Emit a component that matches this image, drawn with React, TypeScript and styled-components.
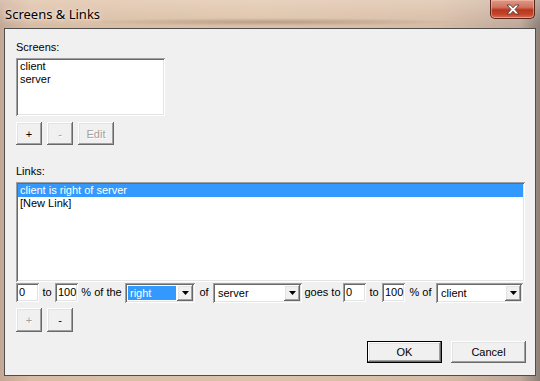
import React from "react";
import styled, { createGlobalStyle, css } from "styled-components";

const Global = createGlobalStyle`
  html, body { margin: 0; padding: 0; }
  body { width: 540px; height: 381px; overflow: hidden; font-family: "Liberation Sans", Arial, sans-serif; }
`;

const raised = css`
  box-shadow: inset -1px -1px #696969, inset 1px 1px #ffffff, inset -2px -2px #a0a0a0, inset 2px 2px #e3e3e3;
`;
const sunken = css`
  box-shadow: inset 1px 1px #a0a0a0, inset -1px -1px #ffffff, inset 2px 2px #696969, inset -2px -2px #e3e3e3;
`;

const Window = styled.div`
  width: 540px;
  height: 381px;
  box-sizing: border-box;
  display: flex;
  flex-direction: column;
  background:
    radial-gradient(ellipse 190px 4px at 270px 22px, rgba(120, 88, 66, 0.35), rgba(120, 88, 66, 0)),
    linear-gradient(180deg, rgba(255,240,225,0.35) 0px, rgba(255,240,225,0) 26px),
    linear-gradient(90deg, #c4a896 0px, #d8bca4 30px, #dcc2aa 260px, #d6bca6 440px, #bfa89a 520px, #8c8078 540px);
  padding: 0 4px 5px 4px;
`;

const TitleBar = styled.div`
  height: 28px;
  display: flex;
  align-items: flex-start;
  justify-content: space-between;
`;

const Title = styled.div`
  font-family: "Noto Sans", "Open Sans", sans-serif;
  font-size: 13px;
  line-height: 18px;
  color: #000;
  margin: 5px 0 0 1px;
  text-shadow: 0 0 6px rgba(255, 245, 235, 0.9), 0 0 3px rgba(255, 245, 235, 0.9);
`;

const CloseButton = styled.div`
  width: 45px;
  height: 19px;
  margin-right: 1px;
  box-sizing: border-box;
  border: 1px solid #5b2418;
  border-top: none;
  border-radius: 0 0 5px 5px;
  background: linear-gradient(180deg, #dc9a88 0%, #d0735e 40%, #b8361e 55%, #c4442a 80%, #d8705a 100%);
  box-shadow: inset 0 0 0 1px rgba(255, 200, 180, 0.5);
  display: flex;
  align-items: center;
  justify-content: center;
`;

const Client = styled.div`
  flex: 1;
  box-sizing: border-box;
  border: 1px solid #4e4e4e;
  background: #f0f0f0;
  padding: 0 9px 0 11px;
  display: flex;
  flex-direction: column;
  font-size: 11px;
  color: #000;
`;

const GroupLabel = styled.div<{ $top: number }>`
  margin-top: ${(p) => p.$top}px;
  height: 13px;
  line-height: 13px;
`;

const ListBox = styled.div<{ $w: number; $h: number; $top: number }>`
  width: ${(p) => p.$w}px;
  height: ${(p) => p.$h}px;
  margin-top: ${(p) => p.$top}px;
  box-sizing: border-box;
  background: #fff;
  padding: 2px;
  ${sunken};
`;

const ListItem = styled.div<{ $selected?: boolean }>`
  height: 13px;
  line-height: 13px;
  padding-left: 2px;
  background: ${(p) => (p.$selected ? "#3399ff" : "transparent")};
  color: ${(p) => (p.$selected ? "#fff" : "#000")};
  white-space: nowrap;
`;

const ButtonRow = styled.div<{ $top: number }>`
  display: flex;
  gap: 5px;
  margin-top: ${(p) => p.$top}px;
`;

const Button = styled.div<{ $w: number; $h: number; $disabled?: boolean; $default?: boolean }>`
  width: ${(p) => p.$w}px;
  height: ${(p) => p.$h}px;
  box-sizing: border-box;
  display: flex;
  align-items: center;
  justify-content: center;
  background: #f0f0f0;
  color: ${(p) => (p.$disabled ? "#a0a0a0" : "#000")};
  text-shadow: ${(p) => (p.$disabled ? "1px 1px #ffffff" : "none")};
  ${(p) =>
    p.$default
      ? css`
          box-shadow: inset 0 0 0 1px #000, inset -2px -2px #696969, inset 2px 2px #ffffff, inset -3px -3px #a0a0a0, inset 3px 3px #e3e3e3;
        `
      : raised};
`;

const ControlRow = styled.div`
  display: flex;
  align-items: flex-start;
  margin-top: 1px;
  height: 20px;
`;

const Edit = styled.div`
  width: 23px;
  height: 19px;
  box-sizing: border-box;
  background: #fff;
  padding: 3px 0 0 3px;
  line-height: 13px;
  ${sunken};
`;

const Word = styled.div<{ $w: number }>`
  width: ${(p) => p.$w}px;
  height: 19px;
  line-height: 19px;
  text-align: center;
  white-space: nowrap;
`;

const Combo = styled.div<{ $w: number }>`
  width: ${(p) => p.$w}px;
  height: 20px;
  box-sizing: border-box;
  background: #fff;
  padding: 2px;
  display: flex;
  ${sunken};
`;

const ComboText = styled.div<{ $focused?: boolean }>`
  flex: 1;
  margin: 1px;
  padding-left: 2px;
  line-height: 14px;
  background: ${(p) => (p.$focused ? "#3399ff" : "transparent")};
  color: ${(p) => (p.$focused ? "#fff" : "#000")};
`;

const DropButton = styled.div`
  width: 16px;
  height: 16px;
  box-sizing: border-box;
  background: #f0f0f0;
  display: flex;
  align-items: center;
  justify-content: center;
  ${raised};
`;

const Footer = styled.div`
  display: flex;
  justify-content: flex-end;
  gap: 9px;
  margin-top: 9px;
`;

const Arrow = () => (
  <svg width="7" height="4" viewBox="0 0 7 4">
    <path d="M0 0h7L3.5 4z" fill="#000" />
  </svg>
);

const CloseX = () => (
  <svg width="14" height="11" viewBox="0 0 14 11">
    <path
      d="M1 1h3.5L7 3.8 9.5 1H13L9 5.5 13 10H9.5L7 7.2 4.5 10H1L5 5.5z"
      fill="#fff"
      stroke="#5a3a34"
      strokeWidth="0.9"
      strokeLinejoin="round"
    />
  </svg>
);

export default function App() {
  return (
    <>
      <Global />
      <Window>
        <TitleBar>
          <Title>Screens &amp; Links</Title>
          <CloseButton>
            <CloseX />
          </CloseButton>
        </TitleBar>
        <Client>
          <GroupLabel $top={12}>Screens:</GroupLabel>
          <ListBox $w={149} $h={58} $top={4}>
            <ListItem>client</ListItem>
            <ListItem>server</ListItem>
          </ListBox>
          <ButtonRow $top={6}>
            <Button $w={26} $h={23}>+</Button>
            <Button $w={26} $h={23} $disabled>-</Button>
            <Button $w={36} $h={23} $disabled>Edit</Button>
          </ButtonRow>
          <GroupLabel $top={20}>Links:</GroupLabel>
          <ListBox $w={509} $h={100} $top={4}>
            <ListItem $selected>client is right of server</ListItem>
            <ListItem>[New Link]</ListItem>
          </ListBox>
          <ControlRow>
            <Edit>0</Edit>
            <Word $w={16}>to</Word>
            <Edit>100</Edit>
            <Word $w={47}>% of the</Word>
            <Combo $w={70}>
              <ComboText $focused>right</ComboText>
              <DropButton>
                <Arrow />
              </DropButton>
            </Combo>
            <Word $w={18}>of</Word>
            <Combo $w={89}>
              <ComboText>server</ComboText>
              <DropButton>
                <Arrow />
              </DropButton>
            </Combo>
            <Word $w={41}>goes to</Word>
            <Edit>0</Edit>
            <Word $w={16}>to</Word>
            <Edit>100</Edit>
            <Word $w={31}>% of</Word>
            <Combo $w={87}>
              <ComboText>client</ComboText>
              <DropButton>
                <Arrow />
              </DropButton>
            </Combo>
          </ControlRow>
          <ButtonRow $top={5}>
            <Button $w={26} $h={24} $disabled>+</Button>
            <Button $w={26} $h={24}>-</Button>
          </ButtonRow>
          <Footer>
            <Button $w={75} $h={22} $default>OK</Button>
            <Button $w={75} $h={22}>Cancel</Button>
          </Footer>
        </Client>
      </Window>
    </>
  );
}
